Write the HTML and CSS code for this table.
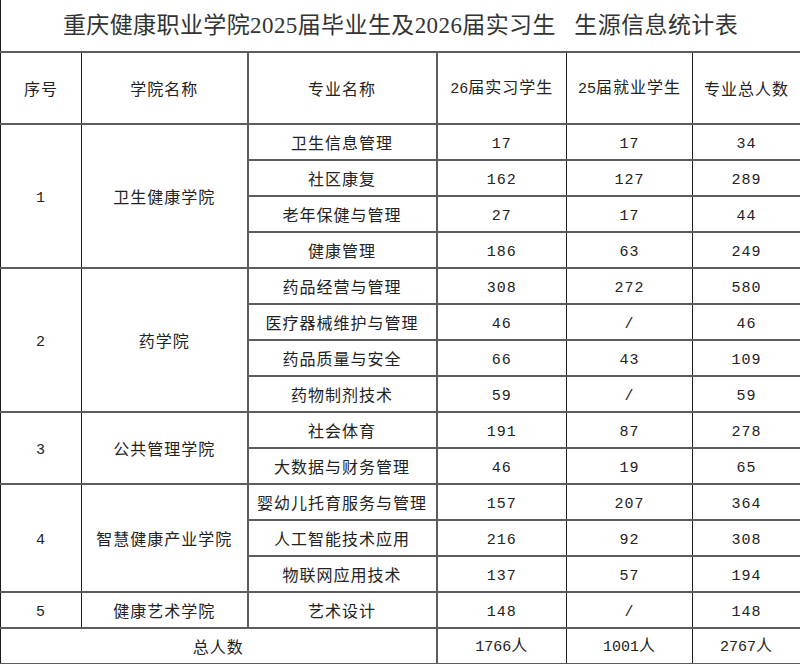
FILE: index.html
```html
<!DOCTYPE html>
<html lang="zh-CN">
<head>
<meta charset="utf-8">
<title>生源信息统计表</title>
<link rel="stylesheet" href="styles.css">
</head>
<body>
<table class="sheet">
  <colgroup>
    <col class="w1"><col class="w2"><col class="w3"><col class="w4"><col class="w5"><col class="w6">
  </colgroup>
  <tr class="r-title"><td colspan="6" class="title">重庆健康职业学院2025届毕业生及2026届实习生   生源信息统计表</td></tr>
  <tr class="r-head">
    <td>序号</td><td>学院名称</td><td class="m">专业名称</td><td class="m"><span class="d">26</span>届实习学生</td><td><span class="d">25</span>届就业学生</td><td>专业总人数</td>
  </tr>
  <tr><td rowspan="4" class="d">1</td><td rowspan="4">卫生健康学院</td><td class="m">卫生信息管理</td><td class="m d">17</td><td class="d">17</td><td class="d">34</td></tr>
  <tr><td class="m">社区康复</td><td class="m d">162</td><td class="d">127</td><td class="d">289</td></tr>
  <tr><td class="m">老年保健与管理</td><td class="m d">27</td><td class="d">17</td><td class="d">44</td></tr>
  <tr><td class="m">健康管理</td><td class="m d">186</td><td class="d">63</td><td class="d">249</td></tr>
  <tr><td rowspan="4" class="d">2</td><td rowspan="4">药学院</td><td class="m">药品经营与管理</td><td class="m d">308</td><td class="d">272</td><td class="d">580</td></tr>
  <tr><td class="m">医疗器械维护与管理</td><td class="m d">46</td><td class="d">/</td><td class="d">46</td></tr>
  <tr><td class="m">药品质量与安全</td><td class="m d">66</td><td class="d">43</td><td class="d">109</td></tr>
  <tr><td class="m">药物制剂技术</td><td class="m d">59</td><td class="d">/</td><td class="d">59</td></tr>
  <tr><td rowspan="2" class="d">3</td><td rowspan="2">公共管理学院</td><td class="m">社会体育</td><td class="m d">191</td><td class="d">87</td><td class="d">278</td></tr>
  <tr><td class="m">大数据与财务管理</td><td class="m d">46</td><td class="d">19</td><td class="d">65</td></tr>
  <tr><td rowspan="3" class="d">4</td><td rowspan="3">智慧健康产业学院</td><td class="m">婴幼儿托育服务与管理</td><td class="m d">157</td><td class="d">207</td><td class="d">364</td></tr>
  <tr><td class="m">人工智能技术应用</td><td class="m d">216</td><td class="d">92</td><td class="d">308</td></tr>
  <tr><td class="m">物联网应用技术</td><td class="m d">137</td><td class="d">57</td><td class="d">194</td></tr>
  <tr><td class="d">5</td><td>健康艺术学院</td><td class="m">艺术设计</td><td class="m d">148</td><td class="d">/</td><td class="d">148</td></tr>
  <tr class="r-total"><td colspan="3">总人数</td><td class="m"><span class="d">1766</span>人</td><td><span class="d">1001</span>人</td><td><span class="d">2767</span>人</td></tr>
</table>
</body>
</html>
```
FILE: styles.css
```css
html, body {
  margin: 0;
  padding: 0;
  background: #fff;
}

.sheet {
  width: 800px;
  table-layout: fixed;
  border-collapse: collapse;
  font-family: "Noto Sans CJK SC", "Noto Sans", sans-serif;
  font-size: 16px;
  color: #222;
}

.w1 { width: 81px; }
.w2 { width: 166px; }
.w3 { width: 189px; }
.w4 { width: 130px; }
.w5 { width: 126px; }
.w6 { width: 108px; }

.sheet td {
  padding: 0;
  text-align: center;
  vertical-align: middle;
  border-left: 1px solid #1a1a1a;
  border-right: 1px solid #1a1a1a;
  border-top: 2px solid #5c5c5c;
  border-bottom: 2px solid #5c5c5c;
  letter-spacing: 1px;
  line-height: 20px;
  white-space: nowrap;
}

.sheet td.m {
  border-left: 2px solid #5c5c5c;
}

.sheet tr {
  height: 36px;
}

.sheet tr.r-title {
  height: 52px;
}

.sheet tr.r-head {
  height: 72px;
}

.sheet td.title {
  border-top: none;
  font-family: "Liberation Serif", "Noto Sans CJK SC", serif;
  font-size: 23px;
  letter-spacing: 0.4px;
  color: #333;
  white-space: pre;
}

.d {
  font-family: "Liberation Mono", "Noto Sans CJK SC", monospace;
  font-size: 15px;
  letter-spacing: 0;
}

.sheet td.d {
  padding-top: 5px;
}
```
